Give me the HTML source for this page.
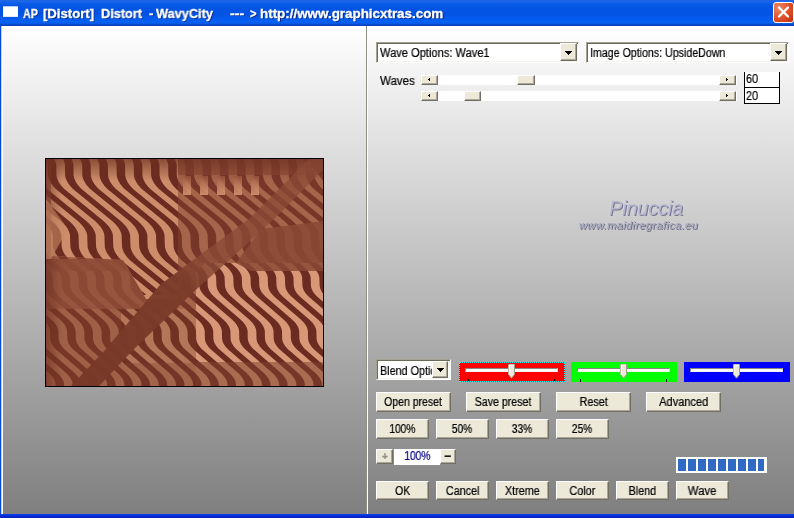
<!DOCTYPE html>
<html><head><meta charset="utf-8">
<style>
*{box-sizing:border-box;margin:0;padding:0}
html,body{width:794px;height:518px;overflow:hidden;background:#0848e0}
body{position:relative;font-family:"Liberation Sans",sans-serif;font-size:12px;color:#000}
.abs{position:absolute}
#title{left:0;top:0;width:794px;height:26px;background:linear-gradient(#2464dc 0,#1a66ec 6%,#0b5ce8 14%,#0354e4 30%,#0353e3 55%,#0459ec 70%,#0862f4 84%,#0a58e4 91%,#0a44c4 96%,#0a3cb8 100%)}
.tw{position:absolute;top:6px;-webkit-text-stroke:0.3px #fff;transform-origin:0 0;font-weight:bold;font-size:13px;color:#fff;white-space:pre;text-shadow:1px 1px 0 #0a2a8a}
#ico{left:3px;top:6px;width:15px;height:11px;background:#fff;border-top:1px solid #b8c8f0;border-bottom:1px solid #e8e8f4}
#close{left:773px;top:2px;width:21px;height:21px;border:1px solid #fff;border-radius:3px;background:radial-gradient(circle at 25% 25%,#ec8866,#e04e28 55%,#b8300c)}
#client{left:1px;top:26px;width:793px;height:488px;background:linear-gradient(#ffffff 0,#7f7f7f 100%)}
#lw{left:1px;top:26px;width:2px;height:488px;background:#fff;border-left:1px solid #d8d0c4}
#lg{display:none}
#div{left:366px;top:26px;width:1px;height:488px;background:#908e80}
#div2{left:367px;top:26px;width:1px;height:488px;background:#fff}
#bot{left:0;top:514px;width:794px;height:4px;background:linear-gradient(#0a3cf0,#0420b8)}
#prev{left:45px;top:158px;width:279px;height:229px;border:1px solid #000;background:#8a4836;overflow:hidden}
#prev svg{display:block}
.tx,.bl,.tw,.wm1,.wm2{will-change:transform}
.tx,.bl{-webkit-text-stroke:0.22px currentColor}
.tx{position:absolute;white-space:pre;transform-origin:0 0;line-height:14px}
.bl{display:inline-block;white-space:pre}
.sel{background:#fff;border:1px solid;border-color:#a5a293 #fff #fff #a5a293;box-shadow:inset 1px 1px 0 #6b6959, inset -1px -1px 0 #f4f2ea}
.dd{position:absolute;right:1px;top:0;bottom:1px;width:17px;background:#ece9d8;border:1px solid;border-color:#fff #716f64 #716f64 #fff;box-shadow:inset -1px -1px 0 #aca899}
.dd svg{position:absolute;left:4px;top:7px}
.dd.sm{right:2px;top:1px;width:16px}
.dd.sm svg{top:6px}
.btn{background:#ece9d8;border:1px solid;border-color:#fff #716f64 #716f64 #fff;box-shadow:inset -1px -1px 0 #aca899;text-align:center;white-space:nowrap}
.sb{height:10px;background:#fff}
.sbb{position:absolute;top:0;height:10px;background:#ece9d8;border:1px solid;border-color:#fff #716f64 #716f64 #fff;box-shadow:inset -1px -1px 0 #aca899}
.ar{position:absolute;left:6px;top:2px}
.val{background:#fff;border:1px solid #000}
.wm1{left:609px;top:197px;font-size:20px;color:#b6b6ce;letter-spacing:-0.2px;font-style:italic;text-shadow:1px 1px 0 #77778f,-0.5px -0.5px 0 #d8d8e8}
.wm2{left:579px;top:219px;font-size:11px;color:#a4a4bc;letter-spacing:0.4px;font-style:italic;text-shadow:1px 1px 0 #6c6c84}
.sl{top:362px;width:106px;height:20px}
.trk{position:absolute;left:6px;top:6px;width:93px;height:4px;background:#fff;border-top:1px solid #8a887c;border-left:1px solid #8a887c;border-right:1px solid #d8d4c4;border-bottom:1px solid #f4f2e8}
.th{position:absolute;top:2px}
.tk{position:absolute;top:17px;width:1px;height:3px;background:#000}
#focus{left:459px;top:362px;width:106px;height:20px;border:1px dotted #0ff}
#prog{left:676px;top:457px;width:91px;height:16px;background:#fff}
#prog i{position:absolute;top:2px;height:12px;background:#316ac5}
</style></head><body>
<div id="title" class="abs"><div id="ico" class="abs"></div><span class="tw" style="left:23.2px;transform:scaleX(0.819)">AP</span><span class="tw" style="left:42.9px;transform:scaleX(1.009)">[Distort]</span><span class="tw" style="left:101.2px;transform:scaleX(0.979)">Distort</span><span class="tw" style="left:149.0px;transform:scaleX(0.991)">-</span><span class="tw" style="left:156.2px;transform:scaleX(0.982)">WavyCity</span><span class="tw" style="left:230.0px;transform:scaleX(1.092)">---</span><span class="tw" style="left:249.6px;transform:scaleX(0.843)">&gt;</span><span class="tw" style="left:260.3px;transform:scaleX(1.030)">http://www.graphicxtras.com</span>
<div id="close" class="abs"><svg width="19" height="18" viewBox="0 0 19 18"><path d="M5 4.5L14 13.5M14 4.5L5 13.5" stroke="#fff" stroke-width="2.3" stroke-linecap="round"/></svg></div></div>
<div id="client" class="abs"></div>
<div id="lw" class="abs"></div><div id="lg" class="abs"></div>
<div id="div" class="abs"></div><div id="div2" class="abs"></div>
<div id="bot" class="abs"></div>
<div id="prev" class="abs"><svg width="277" height="227" viewBox="0 0 277 227"><defs><clipPath id="cT"><rect width="277" height="112"/></clipPath><clipPath id="cB"><rect y="112" width="277" height="115"/></clipPath><clipPath id="cTL"><path d="M5 0H132V140H100L77 101L5 97Z"/></clipPath><clipPath id="cBR"><path d="M150 113L158 104H277V203H150Z"/></clipPath><linearGradient id="bandg" x1="0" y1="1" x2="1" y2="0"><stop offset="0" stop-color="#783828" stop-opacity=".96"/><stop offset=".45" stop-color="#7c3c2a" stop-opacity=".96"/><stop offset=".55" stop-color="#8a4a36" stop-opacity=".8"/><stop offset="1" stop-color="#8a4a36" stop-opacity=".7"/></linearGradient><linearGradient id="comb" x1="0" y1="0" x2="0" y2="1"><stop offset="0" stop-color="#a05a42"/><stop offset="1" stop-color="#e0a07c"/></linearGradient><path id="wA" fill="#6b2b20" d="M-11 122 3.7 134 5.7 136 14.2 136 12.2 134 -2.5 122ZM-11 108 18.6 132 20.9 134 22.9 136 31.4 136 29.4 134 27.1 132 -2.5 108ZM-10.9 74 -10.4 76 -10 88 -9.5 90 -8.8 92 -7.8 94 -6.5 96 -5 98 -3.2 100 -1.1 102 35.8 132 38.1 134 40.1 136 48.6 136 46.6 134 44.3 132 7.4 102 5.3 100 3.5 98 2 96 0.7 94 -0.3 92 -1 90 -1.5 88 -1.9 76 -2.4 74ZM-12.5 54 -2.6 62 -0.5 64 1.4 66 3.1 68 4.4 70 5.5 72 6.3 74 6.8 76 7.2 88 7.7 90 8.4 92 9.4 94 10.7 96 12.2 98 14 100 16.1 102 53 132 55.3 134 57.3 136 65.8 136 63.8 134 61.5 132 24.6 102 22.5 100 20.7 98 19.2 96 17.9 94 16.9 92 16.2 90 15.7 88 15.3 76 14.8 74 14 72 12.9 70 11.6 68 9.9 66 8 64 5.9 62 -4 54ZM-12.5 40 14.6 62 16.7 64 18.6 66 20.3 68 21.6 70 22.7 72 23.5 74 24 76 24.4 88 24.9 90 25.6 92 26.6 94 27.9 96 29.4 98 31.2 100 33.3 102 70.2 132 72.5 134 74.5 136 83 136 81 134 78.7 132 41.8 102 39.7 100 37.9 98 36.4 96 35.1 94 34.1 92 33.4 90 32.9 88 32.5 76 32 74 31.2 72 30.1 70 28.8 68 27.1 66 25.2 64 23.1 62 -4 40ZM-11 26 -9.3 28 -7.4 30 31.8 62 33.9 64 35.8 66 37.5 68 38.8 70 39.9 72 40.7 74 41.2 76 41.6 88 42.1 90 42.8 92 43.8 94 45.1 96 46.6 98 48.4 100 50.5 102 87.4 132 89.7 134 91.7 136 100.2 136 98.2 134 95.9 132 59 102 56.9 100 55.1 98 53.6 96 52.3 94 51.3 92 50.6 90 50.1 88 49.7 76 49.2 74 48.4 72 47.3 70 46 68 44.3 66 42.4 64 40.3 62 1.1 30 -0.8 28 -2.5 26ZM-0.2 0 0.7 2 1.4 4 1.8 6 1.9 16 2.2 18 2.8 20 3.7 22 4.8 24 6.2 26 7.9 28 9.8 30 49 62 51.1 64 53 66 54.7 68 56 70 57.1 72 57.9 74 58.4 76 58.8 88 59.3 90 60 92 61 94 62.3 96 63.8 98 65.6 100 67.7 102 104.6 132 106.9 134 108.9 136 117.4 136 115.4 134 113.1 132 76.2 102 74.1 100 72.3 98 70.8 96 69.5 94 68.5 92 67.8 90 67.3 88 66.9 76 66.4 74 65.6 72 64.5 70 63.2 68 61.5 66 59.6 64 57.5 62 18.3 30 16.4 28 14.7 26 13.3 24 12.2 22 11.3 20 10.7 18 10.4 16 10.3 6 9.9 4 9.2 2 8.3 0ZM17 0 17.9 2 18.6 4 19 6 19.1 16 19.4 18 20 20 20.9 22 22 24 23.4 26 25.1 28 27 30 66.2 62 68.3 64 70.2 66 71.9 68 73.2 70 74.3 72 75.1 74 75.6 76 76 88 76.5 90 77.2 92 78.2 94 79.5 96 81 98 82.8 100 84.9 102 121.8 132 124.1 134 126.1 136 134.6 136 132.6 134 130.3 132 93.4 102 91.3 100 89.5 98 88 96 86.7 94 85.7 92 85 90 84.5 88 84.1 76 83.6 74 82.8 72 81.7 70 80.4 68 78.7 66 76.8 64 74.7 62 35.5 30 33.6 28 31.9 26 30.5 24 29.4 22 28.5 20 27.9 18 27.6 16 27.5 6 27.1 4 26.4 2 25.5 0ZM34.2 0 35.1 2 35.8 4 36.2 6 36.3 16 36.6 18 37.2 20 38.1 22 39.2 24 40.6 26 42.3 28 44.2 30 83.4 62 85.5 64 87.4 66 89.1 68 90.4 70 91.5 72 92.3 74 92.8 76 93.2 88 93.7 90 94.4 92 95.4 94 96.7 96 98.2 98 100 100 102.1 102 139 132 141.3 134 143.3 136 151.8 136 149.8 134 147.5 132 110.6 102 108.5 100 106.7 98 105.2 96 103.9 94 102.9 92 102.2 90 101.7 88 101.3 76 100.8 74 100 72 98.9 70 97.6 68 95.9 66 94 64 91.9 62 52.7 30 50.8 28 49.1 26 47.7 24 46.6 22 45.7 20 45.1 18 44.8 16 44.7 6 44.3 4 43.6 2 42.7 0ZM51.4 0 52.3 2 53 4 53.4 6 53.5 16 53.8 18 54.4 20 55.3 22 56.4 24 57.8 26 59.5 28 61.4 30 100.6 62 102.7 64 104.6 66 106.3 68 107.6 70 108.7 72 109.5 74 110 76 110.4 88 110.9 90 111.6 92 112.6 94 113.9 96 115.4 98 117.2 100 119.3 102 156.2 132 158.5 134 160.5 136 169 136 167 134 164.7 132 127.8 102 125.7 100 123.9 98 122.4 96 121.1 94 120.1 92 119.4 90 118.9 88 118.5 76 118 74 117.2 72 116.1 70 114.8 68 113.1 66 111.2 64 109.1 62 69.9 30 68 28 66.3 26 64.9 24 63.8 22 62.9 20 62.3 18 62 16 61.9 6 61.5 4 60.8 2 59.9 0ZM68.6 0 69.5 2 70.2 4 70.6 6 70.7 16 71 18 71.6 20 72.5 22 73.6 24 75 26 76.7 28 78.6 30 117.8 62 119.9 64 121.8 66 123.5 68 124.8 70 125.9 72 126.7 74 127.2 76 127.6 88 128.1 90 128.8 92 129.8 94 131.1 96 132.6 98 134.4 100 136.5 102 173.4 132 175.7 134 177.7 136 186.2 136 184.2 134 181.9 132 145 102 142.9 100 141.1 98 139.6 96 138.3 94 137.3 92 136.6 90 136.1 88 135.7 76 135.2 74 134.4 72 133.3 70 132 68 130.3 66 128.4 64 126.3 62 87.1 30 85.2 28 83.5 26 82.1 24 81 22 80.1 20 79.5 18 79.2 16 79.1 6 78.7 4 78 2 77.1 0ZM85.8 0 86.7 2 87.4 4 87.8 6 87.9 16 88.2 18 88.8 20 89.7 22 90.8 24 92.2 26 93.9 28 95.8 30 135 62 137.1 64 139 66 140.7 68 142 70 143.1 72 143.9 74 144.4 76 144.8 88 145.3 90 146 92 147 94 148.3 96 149.8 98 151.6 100 153.7 102 190.6 132 192.9 134 194.9 136 203.4 136 201.4 134 199.1 132 162.2 102 160.1 100 158.3 98 156.8 96 155.5 94 154.5 92 153.8 90 153.3 88 152.9 76 152.4 74 151.6 72 150.5 70 149.2 68 147.5 66 145.6 64 143.5 62 104.3 30 102.4 28 100.7 26 99.3 24 98.2 22 97.3 20 96.7 18 96.4 16 96.3 6 95.9 4 95.2 2 94.3 0ZM103 0 103.9 2 104.6 4 105 6 105.1 16 105.4 18 106 20 106.9 22 108 24 109.4 26 111.1 28 113 30 152.2 62 154.3 64 156.2 66 157.9 68 159.2 70 160.3 72 161.1 74 161.6 76 162 88 162.5 90 163.2 92 164.2 94 165.5 96 167 98 168.8 100 170.9 102 207.8 132 210.1 134 212.1 136 220.6 136 218.6 134 216.3 132 179.4 102 177.3 100 175.5 98 174 96 172.7 94 171.7 92 171 90 170.5 88 170.1 76 169.6 74 168.8 72 167.7 70 166.4 68 164.7 66 162.8 64 160.7 62 121.5 30 119.6 28 117.9 26 116.5 24 115.4 22 114.5 20 113.9 18 113.6 16 113.5 6 113.1 4 112.4 2 111.5 0ZM120.2 0 121.1 2 121.8 4 122.2 6 122.3 16 122.6 18 123.2 20 124.1 22 125.2 24 126.6 26 128.3 28 130.2 30 169.4 62 171.5 64 173.4 66 175.1 68 176.4 70 177.5 72 178.3 74 178.8 76 179.2 88 179.7 90 180.4 92 181.4 94 182.7 96 184.2 98 186 100 188.1 102 225 132 227.3 134 229.3 136 237.8 136 235.8 134 233.5 132 196.6 102 194.5 100 192.7 98 191.2 96 189.9 94 188.9 92 188.2 90 187.7 88 187.3 76 186.8 74 186 72 184.9 70 183.6 68 181.9 66 180 64 177.9 62 138.7 30 136.8 28 135.1 26 133.7 24 132.6 22 131.7 20 131.1 18 130.8 16 130.7 6 130.3 4 129.6 2 128.7 0ZM137.4 0 138.3 2 139 4 139.4 6 139.5 16 139.8 18 140.4 20 141.3 22 142.4 24 143.8 26 145.5 28 147.4 30 186.6 62 188.7 64 190.6 66 192.3 68 193.6 70 194.7 72 195.5 74 196 76 196.4 88 196.9 90 197.6 92 198.6 94 199.9 96 201.4 98 203.2 100 205.3 102 242.2 132 244.5 134 246.5 136 255 136 253 134 250.7 132 213.8 102 211.7 100 209.9 98 208.4 96 207.1 94 206.1 92 205.4 90 204.9 88 204.5 76 204 74 203.2 72 202.1 70 200.8 68 199.1 66 197.2 64 195.1 62 155.9 30 154 28 152.3 26 150.9 24 149.8 22 148.9 20 148.3 18 148 16 147.9 6 147.5 4 146.8 2 145.9 0ZM154.6 0 155.5 2 156.2 4 156.6 6 156.7 16 157 18 157.6 20 158.5 22 159.6 24 161 26 162.7 28 164.6 30 203.8 62 205.9 64 207.8 66 209.5 68 210.8 70 211.9 72 212.7 74 213.2 76 213.6 88 214.1 90 214.8 92 215.8 94 217.1 96 218.6 98 220.4 100 222.5 102 259.4 132 261.7 134 263.7 136 272.2 136 270.2 134 267.9 132 231 102 228.9 100 227.1 98 225.6 96 224.3 94 223.3 92 222.6 90 222.1 88 221.7 76 221.2 74 220.4 72 219.3 70 218 68 216.3 66 214.4 64 212.3 62 173.1 30 171.2 28 169.5 26 168.1 24 167 22 166.1 20 165.5 18 165.2 16 165.1 6 164.7 4 164 2 163.1 0ZM171.8 0 172.7 2 173.4 4 173.8 6 173.9 16 174.2 18 174.8 20 175.7 22 176.8 24 178.2 26 179.9 28 181.8 30 221 62 223.1 64 225 66 226.7 68 228 70 229.1 72 229.9 74 230.4 76 230.8 88 231.3 90 232 92 233 94 234.3 96 235.8 98 237.6 100 239.7 102 276.6 132 278.9 134 280.9 136 289.4 136 287.4 134 285.1 132 248.2 102 246.1 100 244.3 98 242.8 96 241.5 94 240.5 92 239.8 90 239.3 88 238.9 76 238.4 74 237.6 72 236.5 70 235.2 68 233.5 66 231.6 64 229.5 62 190.3 30 188.4 28 186.7 26 185.3 24 184.2 22 183.3 20 182.7 18 182.4 16 182.3 6 181.9 4 181.2 2 180.3 0ZM189 0 189.9 2 190.6 4 191 6 191.1 16 191.4 18 192 20 192.9 22 194 24 195.4 26 197.1 28 199 30 238.2 62 240.3 64 242.2 66 243.9 68 245.2 70 246.3 72 247.1 74 247.6 76 248 88 248.5 90 249.2 92 250.2 94 251.5 96 253 98 254.8 100 256.9 102 281.4 122 289.9 122 265.4 102 263.3 100 261.5 98 260 96 258.7 94 257.7 92 257 90 256.5 88 256.1 76 255.6 74 254.8 72 253.7 70 252.4 68 250.7 66 248.8 64 246.7 62 207.5 30 205.6 28 203.9 26 202.5 24 201.4 22 200.5 20 199.9 18 199.6 16 199.5 6 199.1 4 198.4 2 197.5 0ZM206.2 0 207.1 2 207.8 4 208.2 6 208.3 16 208.6 18 209.2 20 210.1 22 211.2 24 212.6 26 214.3 28 216.2 30 255.4 62 257.5 64 259.4 66 261.1 68 262.4 70 263.5 72 264.3 74 264.8 76 265.2 88 265.7 90 266.4 92 267.4 94 268.7 96 270.2 98 272 100 274.1 102 281.4 108 289.9 108 282.6 102 280.5 100 278.7 98 277.2 96 275.9 94 274.9 92 274.2 90 273.7 88 273.3 76 272.8 74 272 72 270.9 70 269.6 68 267.9 66 266 64 263.9 62 224.7 30 222.8 28 221.1 26 219.7 24 218.6 22 217.7 20 217.1 18 216.8 16 216.7 6 216.3 4 215.6 2 214.7 0ZM223.4 0 224.3 2 225 4 225.4 6 225.5 16 225.8 18 226.4 20 227.3 22 228.4 24 229.8 26 231.5 28 233.4 30 272.6 62 274.7 64 276.6 66 278.3 68 279.6 70 288.1 70 286.8 68 285.1 66 283.2 64 281.1 62 241.9 30 240 28 238.3 26 236.9 24 235.8 22 234.9 20 234.3 18 234 16 233.9 6 233.5 4 232.8 2 231.9 0ZM240.6 0 241.5 2 242.2 4 242.6 6 242.7 16 243 18 243.6 20 244.5 22 245.6 24 247 26 248.7 28 250.6 30 279.9 54 288.4 54 259.1 30 257.2 28 255.5 26 254.1 24 253 22 252.1 20 251.5 18 251.2 16 251.1 6 250.7 4 250 2 249.1 0ZM257.8 0 258.7 2 259.4 4 259.8 6 259.9 16 260.2 18 260.8 20 261.7 22 262.8 24 264.2 26 265.9 28 267.8 30 279.9 40 288.4 40 276.3 30 274.4 28 272.7 26 271.3 24 270.2 22 269.3 20 268.7 18 268.4 16 268.3 6 267.9 4 267.2 2 266.3 0ZM275 0 275.9 2 276.6 4 277 6 277.1 16 277.4 18 278 20 278.9 22 280 24 288.5 24 287.4 22 286.5 20 285.9 18 285.6 16 285.5 6 285.1 4 284.4 2 283.5 0Z"/><path id="wB" fill="#6b2b20" d="M-10.7 218 -9.4 220 -8.4 222 -7.8 224 -7.6 227 0.9 227 0.7 224 0.1 222 -0.9 220 -2.2 218ZM-11 202 2.9 214 4.9 216 6.5 218 7.8 220 8.8 222 9.4 224 9.6 227 18.1 227 17.9 224 17.3 222 16.3 220 15 218 13.4 216 11.4 214 -2.5 202ZM-10.8 186 -9.4 188 -7.6 190 20.1 214 22.1 216 23.7 218 25 220 26 222 26.6 224 26.8 227 35.3 227 35.1 224 34.5 222 33.5 220 32.2 218 30.6 216 28.6 214 0.9 190 -0.9 188 -2.3 186ZM-10.8 154 -1.7 162 0.2 164 1.6 166 2.7 168 3.5 170 3.9 172 4.1 180 4.5 182 5.2 184 6.4 186 7.8 188 9.6 190 37.3 214 39.3 216 40.9 218 42.2 220 43.2 222 43.8 224 44 227 52.5 227 52.3 224 51.7 222 50.7 220 49.4 218 47.8 216 45.8 214 18.1 190 16.3 188 14.9 186 13.7 184 13 182 12.6 180 12.4 172 12 170 11.2 168 10.1 166 8.7 164 6.8 162 -2.3 154ZM-12.1 138 13.4 160 15.5 162 17.4 164 18.8 166 19.9 168 20.7 170 21.1 172 21.3 180 21.7 182 22.4 184 23.6 186 25 188 26.8 190 54.5 214 56.5 216 58.1 218 59.4 220 60.4 222 61 224 61.2 227 69.7 227 69.5 224 68.9 222 67.9 220 66.6 218 65 216 63 214 35.3 190 33.5 188 32.1 186 30.9 184 30.2 182 29.8 180 29.6 172 29.2 170 28.4 168 27.3 166 25.9 164 24 162 21.9 160 -3.6 138ZM-10.6 106 -8.3 108 -6.3 110 -4.7 112 -3.4 114 -2.5 116 -1.9 118 -1.6 126 -1.4 128 -0.8 130 0.1 132 1.4 134 3.1 136 5.1 138 30.6 160 32.7 162 34.6 164 36 166 37.1 168 37.9 170 38.3 172 38.5 180 38.9 182 39.6 184 40.8 186 42.2 188 44 190 71.7 214 73.7 216 75.3 218 76.6 220 77.6 222 78.2 224 78.4 227 86.9 227 86.7 224 86.1 222 85.1 220 83.8 218 82.2 216 80.2 214 52.5 190 50.7 188 49.3 186 48.1 184 47.4 182 47 180 46.8 172 46.4 170 45.6 168 44.5 166 43.1 164 41.2 162 39.1 160 13.6 138 11.6 136 9.9 134 8.6 132 7.7 130 7.1 128 6.9 126 6.6 118 6 116 5.1 114 3.8 112 2.2 110 0.2 108 -2.1 106ZM-5 96 8.9 108 10.9 110 12.5 112 13.8 114 14.7 116 15.3 118 15.6 126 15.8 128 16.4 130 17.3 132 18.6 134 20.3 136 22.3 138 47.8 160 49.9 162 51.8 164 53.2 166 54.3 168 55.1 170 55.5 172 55.7 180 56.1 182 56.8 184 58 186 59.4 188 61.2 190 88.9 214 90.9 216 92.5 218 93.8 220 94.8 222 95.4 224 95.6 227 104.1 227 103.9 224 103.3 222 102.3 220 101 218 99.4 216 97.4 214 69.7 190 67.9 188 66.5 186 65.3 184 64.6 182 64.2 180 64 172 63.6 170 62.8 168 61.7 166 60.3 164 58.4 162 56.3 160 30.8 138 28.8 136 27.1 134 25.8 132 24.9 130 24.3 128 24.1 126 23.8 118 23.2 116 22.3 114 21 112 19.4 110 17.4 108 3.5 96ZM12.2 96 26.1 108 28.1 110 29.7 112 31 114 31.9 116 32.5 118 32.8 126 33 128 33.6 130 34.5 132 35.8 134 37.5 136 39.5 138 65 160 67.1 162 69 164 70.4 166 71.5 168 72.3 170 72.7 172 72.9 180 73.3 182 74 184 75.2 186 76.6 188 78.4 190 106.1 214 108.1 216 109.7 218 111 220 112 222 112.6 224 112.8 227 121.3 227 121.1 224 120.5 222 119.5 220 118.2 218 116.6 216 114.6 214 86.9 190 85.1 188 83.7 186 82.5 184 81.8 182 81.4 180 81.2 172 80.8 170 80 168 78.9 166 77.5 164 75.6 162 73.5 160 48 138 46 136 44.3 134 43 132 42.1 130 41.5 128 41.3 126 41 118 40.4 116 39.5 114 38.2 112 36.6 110 34.6 108 20.7 96ZM29.4 96 43.3 108 45.3 110 46.9 112 48.2 114 49.1 116 49.7 118 50 126 50.2 128 50.8 130 51.7 132 53 134 54.7 136 56.7 138 82.2 160 84.3 162 86.2 164 87.6 166 88.7 168 89.5 170 89.9 172 90.1 180 90.5 182 91.2 184 92.4 186 93.8 188 95.6 190 123.3 214 125.3 216 126.9 218 128.2 220 129.2 222 129.8 224 130 227 138.5 227 138.3 224 137.7 222 136.7 220 135.4 218 133.8 216 131.8 214 104.1 190 102.3 188 100.9 186 99.7 184 99 182 98.6 180 98.4 172 98 170 97.2 168 96.1 166 94.7 164 92.8 162 90.7 160 65.2 138 63.2 136 61.5 134 60.2 132 59.3 130 58.7 128 58.5 126 58.2 118 57.6 116 56.7 114 55.4 112 53.8 110 51.8 108 37.9 96ZM46.6 96 60.5 108 62.5 110 64.1 112 65.4 114 66.3 116 66.9 118 67.2 126 67.4 128 68 130 68.9 132 70.2 134 71.9 136 73.9 138 99.4 160 101.5 162 103.4 164 104.8 166 105.9 168 106.7 170 107.1 172 107.3 180 107.7 182 108.4 184 109.6 186 111 188 112.8 190 140.5 214 142.5 216 144.1 218 145.4 220 146.4 222 147 224 147.2 227 155.7 227 155.5 224 154.9 222 153.9 220 152.6 218 151 216 149 214 121.3 190 119.5 188 118.1 186 116.9 184 116.2 182 115.8 180 115.6 172 115.2 170 114.4 168 113.3 166 111.9 164 110 162 107.9 160 82.4 138 80.4 136 78.7 134 77.4 132 76.5 130 75.9 128 75.7 126 75.4 118 74.8 116 73.9 114 72.6 112 71 110 69 108 55.1 96ZM63.8 96 77.7 108 79.7 110 81.3 112 82.6 114 83.5 116 84.1 118 84.4 126 84.6 128 85.2 130 86.1 132 87.4 134 89.1 136 91.1 138 116.6 160 118.7 162 120.6 164 122 166 123.1 168 123.9 170 124.3 172 124.5 180 124.9 182 125.6 184 126.8 186 128.2 188 130 190 157.7 214 159.7 216 161.3 218 162.6 220 163.6 222 164.2 224 164.4 227 172.9 227 172.7 224 172.1 222 171.1 220 169.8 218 168.2 216 166.2 214 138.5 190 136.7 188 135.3 186 134.1 184 133.4 182 133 180 132.8 172 132.4 170 131.6 168 130.5 166 129.1 164 127.2 162 125.1 160 99.6 138 97.6 136 95.9 134 94.6 132 93.7 130 93.1 128 92.9 126 92.6 118 92 116 91.1 114 89.8 112 88.2 110 86.2 108 72.3 96ZM81 96 94.9 108 96.9 110 98.5 112 99.8 114 100.7 116 101.3 118 101.6 126 101.8 128 102.4 130 103.3 132 104.6 134 106.3 136 108.3 138 133.8 160 135.9 162 137.8 164 139.2 166 140.3 168 141.1 170 141.5 172 141.7 180 142.1 182 142.8 184 144 186 145.4 188 147.2 190 174.9 214 176.9 216 178.5 218 179.8 220 180.8 222 181.4 224 181.6 227 190.1 227 189.9 224 189.3 222 188.3 220 187 218 185.4 216 183.4 214 155.7 190 153.9 188 152.5 186 151.3 184 150.6 182 150.2 180 150 172 149.6 170 148.8 168 147.7 166 146.3 164 144.4 162 142.3 160 116.8 138 114.8 136 113.1 134 111.8 132 110.9 130 110.3 128 110.1 126 109.8 118 109.2 116 108.3 114 107 112 105.4 110 103.4 108 89.5 96ZM98.2 96 112.1 108 114.1 110 115.7 112 117 114 117.9 116 118.5 118 118.8 126 119 128 119.6 130 120.5 132 121.8 134 123.5 136 125.5 138 151 160 153.1 162 155 164 156.4 166 157.5 168 158.3 170 158.7 172 158.9 180 159.3 182 160 184 161.2 186 162.6 188 164.4 190 192.1 214 194.1 216 195.7 218 197 220 198 222 198.6 224 198.8 227 207.3 227 207.1 224 206.5 222 205.5 220 204.2 218 202.6 216 200.6 214 172.9 190 171.1 188 169.7 186 168.5 184 167.8 182 167.4 180 167.2 172 166.8 170 166 168 164.9 166 163.5 164 161.6 162 159.5 160 134 138 132 136 130.3 134 129 132 128.1 130 127.5 128 127.3 126 127 118 126.4 116 125.5 114 124.2 112 122.6 110 120.6 108 106.7 96ZM115.4 96 129.3 108 131.3 110 132.9 112 134.2 114 135.1 116 135.7 118 136 126 136.2 128 136.8 130 137.7 132 139 134 140.7 136 142.7 138 168.2 160 170.3 162 172.2 164 173.6 166 174.7 168 175.5 170 175.9 172 176.1 180 176.5 182 177.2 184 178.4 186 179.8 188 181.6 190 209.3 214 211.3 216 212.9 218 214.2 220 215.2 222 215.8 224 216 227 224.5 227 224.3 224 223.7 222 222.7 220 221.4 218 219.8 216 217.8 214 190.1 190 188.3 188 186.9 186 185.7 184 185 182 184.6 180 184.4 172 184 170 183.2 168 182.1 166 180.7 164 178.8 162 176.7 160 151.2 138 149.2 136 147.5 134 146.2 132 145.3 130 144.7 128 144.5 126 144.2 118 143.6 116 142.7 114 141.4 112 139.8 110 137.8 108 123.9 96ZM132.6 96 146.5 108 148.5 110 150.1 112 151.4 114 152.3 116 152.9 118 153.2 126 153.4 128 154 130 154.9 132 156.2 134 157.9 136 159.9 138 185.4 160 187.5 162 189.4 164 190.8 166 191.9 168 192.7 170 193.1 172 193.3 180 193.7 182 194.4 184 195.6 186 197 188 198.8 190 226.5 214 228.5 216 230.1 218 231.4 220 232.4 222 233 224 233.2 227 241.7 227 241.5 224 240.9 222 239.9 220 238.6 218 237 216 235 214 207.3 190 205.5 188 204.1 186 202.9 184 202.2 182 201.8 180 201.6 172 201.2 170 200.4 168 199.3 166 197.9 164 196 162 193.9 160 168.4 138 166.4 136 164.7 134 163.4 132 162.5 130 161.9 128 161.7 126 161.4 118 160.8 116 159.9 114 158.6 112 157 110 155 108 141.1 96ZM149.8 96 163.7 108 165.7 110 167.3 112 168.6 114 169.5 116 170.1 118 170.4 126 170.6 128 171.2 130 172.1 132 173.4 134 175.1 136 177.1 138 202.6 160 204.7 162 206.6 164 208 166 209.1 168 209.9 170 210.3 172 210.5 180 210.9 182 211.6 184 212.8 186 214.2 188 216 190 243.7 214 245.7 216 247.3 218 248.6 220 249.6 222 250.2 224 250.4 227 258.9 227 258.7 224 258.1 222 257.1 220 255.8 218 254.2 216 252.2 214 224.5 190 222.7 188 221.3 186 220.1 184 219.4 182 219 180 218.8 172 218.4 170 217.6 168 216.5 166 215.1 164 213.2 162 211.1 160 185.6 138 183.6 136 181.9 134 180.6 132 179.7 130 179.1 128 178.9 126 178.6 118 178 116 177.1 114 175.8 112 174.2 110 172.2 108 158.3 96ZM167 96 180.9 108 182.9 110 184.5 112 185.8 114 186.7 116 187.3 118 187.6 126 187.8 128 188.4 130 189.3 132 190.6 134 192.3 136 194.3 138 219.8 160 221.9 162 223.8 164 225.2 166 226.3 168 227.1 170 227.5 172 227.7 180 228.1 182 228.8 184 230 186 231.4 188 233.2 190 260.9 214 262.9 216 264.5 218 265.8 220 266.8 222 267.4 224 267.6 227 276.1 227 275.9 224 275.3 222 274.3 220 273 218 271.4 216 269.4 214 241.7 190 239.9 188 238.5 186 237.3 184 236.6 182 236.2 180 236 172 235.6 170 234.8 168 233.7 166 232.3 164 230.4 162 228.3 160 202.8 138 200.8 136 199.1 134 197.8 132 196.9 130 196.3 128 196.1 126 195.8 118 195.2 116 194.3 114 193 112 191.4 110 189.4 108 175.5 96ZM184.2 96 198.1 108 200.1 110 201.7 112 203 114 203.9 116 204.5 118 204.8 126 205 128 205.6 130 206.5 132 207.8 134 209.5 136 211.5 138 237 160 239.1 162 241 164 242.4 166 243.5 168 244.3 170 244.7 172 244.9 180 245.3 182 246 184 247.2 186 248.6 188 250.4 190 278.1 214 280.1 216 288.6 216 286.6 214 258.9 190 257.1 188 255.7 186 254.5 184 253.8 182 253.4 180 253.2 172 252.8 170 252 168 250.9 166 249.5 164 247.6 162 245.5 160 220 138 218 136 216.3 134 215 132 214.1 130 213.5 128 213.3 126 213 118 212.4 116 211.5 114 210.2 112 208.6 110 206.6 108 192.7 96ZM201.4 96 215.3 108 217.3 110 218.9 112 220.2 114 221.1 116 221.7 118 222 126 222.2 128 222.8 130 223.7 132 225 134 226.7 136 228.7 138 254.2 160 256.3 162 258.2 164 259.6 166 260.7 168 261.5 170 261.9 172 262.1 180 262.5 182 263.2 184 264.4 186 265.8 188 267.6 190 279.1 200 287.6 200 276.1 190 274.3 188 272.9 186 271.7 184 271 182 270.6 180 270.4 172 270 170 269.2 168 268.1 166 266.7 164 264.8 162 262.7 160 237.2 138 235.2 136 233.5 134 232.2 132 231.3 130 230.7 128 230.5 126 230.2 118 229.6 116 228.7 114 227.4 112 225.8 110 223.8 108 209.9 96ZM218.6 96 232.5 108 234.5 110 236.1 112 237.4 114 238.3 116 238.9 118 239.2 126 239.4 128 240 130 240.9 132 242.2 134 243.9 136 245.9 138 271.4 160 273.5 162 275.4 164 276.8 166 277.9 168 278.7 170 279.1 172 287.6 172 287.2 170 286.4 168 285.3 166 283.9 164 282 162 279.9 160 254.4 138 252.4 136 250.7 134 249.4 132 248.5 130 247.9 128 247.7 126 247.4 118 246.8 116 245.9 114 244.6 112 243 110 241 108 227.1 96ZM235.8 96 249.7 108 251.7 110 253.3 112 254.6 114 255.5 116 256.1 118 256.4 126 256.6 128 257.2 130 258.1 132 259.4 134 261.1 136 263.1 138 279.3 152 287.8 152 271.6 138 269.6 136 267.9 134 266.6 132 265.7 130 265.1 128 264.9 126 264.6 118 264 116 263.1 114 261.8 112 260.2 110 258.2 108 244.3 96ZM253 96 266.9 108 268.9 110 270.5 112 271.8 114 272.7 116 273.3 118 273.6 126 273.8 128 274.4 130 275.3 132 276.6 134 278.3 136 280.3 138 288.8 138 286.8 136 285.1 134 283.8 132 282.9 130 282.3 128 282.1 126 281.8 118 281.2 116 280.3 114 279 112 277.4 110 275.4 108 261.5 96ZM270.2 96 279.5 104 288 104 278.7 96Z"/></defs><rect width="277" height="227" fill="#d29270"/><g clip-path="url(#cT)"><use href="#wA"/></g><g clip-path="url(#cB)"><use href="#wB"/></g><rect x="132" y="0" width="145" height="112" fill="#82402e" opacity=".55"/><rect x="0" y="0" width="132" height="112" fill="#82402e" opacity=".6"/><rect x="0" y="100" width="132" height="50" fill="#8e4c38" opacity=".88"/><rect x="132" y="112" width="18" height="38" fill="#82402e" opacity=".55"/><rect x="0" y="150" width="75" height="77" fill="#7e3e2c" opacity=".6"/><rect x="75" y="150" width="75" height="54" fill="#7e3e2c" opacity=".35"/><rect x="75" y="204" width="75" height="23" fill="#7e3e2c" opacity=".55"/><rect x="150" y="203" width="127" height="24" fill="#84442f" opacity=".5"/><rect x="132" y="0" width="145" height="16" fill="#8a4734" opacity=".55"/><path fill="url(#comb)" opacity=".8" d="M137 17h8v19h-8zM154 17h8v19h-8zM171 17h8v19h-8zM188 17h8v19h-8zM205 17h8v19h-8z"/><g clip-path="url(#cTL)"><rect width="277" height="227" fill="#cd8d6b"/><use href="#wA"/></g><g clip-path="url(#cBR)"><rect width="277" height="227" fill="#d89878"/><use href="#wB"/></g><linearGradient id="tsh" x1="0" y1="0" x2="0" y2="1"><stop offset="0" stop-color="#6e3020" stop-opacity=".7"/><stop offset="1" stop-color="#6e3020" stop-opacity="0"/></linearGradient><rect width="277" height="22" fill="url(#tsh)"/><linearGradient id="lsh" x1="0" y1="0" x2="1" y2="0"><stop offset="0" stop-color="#6e3020" stop-opacity=".6"/><stop offset="1" stop-color="#6e3020" stop-opacity="0"/></linearGradient><rect width="16" height="227" fill="url(#lsh)"/><path d="M262 0H277V22Z" fill="#6a2a1c" opacity=".7"/><path d="M0 40L22 70L5 100H0Z" fill="#c98a68" opacity=".6"/><path d="M25 227L59 191L114 126L143 104L203 60L252 11L263 0H277V11L228 60L180 104L155 126L87 191L53 227Z" fill="url(#bandg)"/><path d="M215 70L277 62V112H205L190 104Z" fill="#8a4935" opacity=".85"/></svg></div>

<div class="abs sel" style="left:376px;top:42px;width:203px;height:21px"><span class="tx" style="left:3.0px;top:3px;transform:scaleX(0.925);">Wave Options: Wave1</span><div class="dd"><svg width="7" height="4" viewBox="0 0 7 4" shape-rendering="crispEdges"><rect x="0" y="0" width="7" height="1"/><rect x="1" y="1" width="5" height="1"/><rect x="2" y="2" width="3" height="1"/><rect x="3" y="3" width="1" height="1"/></svg></div></div>
<div class="abs sel" style="left:586px;top:42px;width:203px;height:21px"><span class="tx" style="left:3.0px;top:3px;transform:scaleX(0.886);">Image Options: UpsideDown</span><div class="dd"><svg width="7" height="4" viewBox="0 0 7 4" shape-rendering="crispEdges"><rect x="0" y="0" width="7" height="1"/><rect x="1" y="1" width="5" height="1"/><rect x="2" y="2" width="3" height="1"/><rect x="3" y="3" width="1" height="1"/></svg></div></div>
<span class="tx" style="left:379.5px;top:74px;transform:scaleX(0.960);">Waves</span>
<div class="abs sb" style="left:421px;top:75px;width:316px"><div class="sbb" style="left:0;width:17px"><svg class="ar" width="2" height="3" viewBox="0 0 2 3" shape-rendering="crispEdges"><rect x="1" y="0" width="1" height="3" fill="#000"/><rect x="0" y="1" width="1" height="1" fill="#000"/></svg></div><div class="sbb" style="left:96px;width:18px"></div><div class="sbb" style="left:298px;width:17px"><svg class="ar" width="2" height="3" viewBox="0 0 2 3" shape-rendering="crispEdges"><rect x="0" y="0" width="1" height="3" fill="#000"/><rect x="1" y="1" width="1" height="1" fill="#000"/></svg></div></div>
<div class="abs sb" style="left:421px;top:91px;width:316px"><div class="sbb" style="left:0;width:17px"><svg class="ar" width="2" height="3" viewBox="0 0 2 3" shape-rendering="crispEdges"><rect x="1" y="0" width="1" height="3" fill="#000"/><rect x="0" y="1" width="1" height="1" fill="#000"/></svg></div><div class="sbb" style="left:43px;width:17px"></div><div class="sbb" style="left:298px;width:17px"><svg class="ar" width="2" height="3" viewBox="0 0 2 3" shape-rendering="crispEdges"><rect x="0" y="0" width="1" height="3" fill="#000"/><rect x="1" y="1" width="1" height="1" fill="#000"/></svg></div></div>
<div class="abs val" style="left:744px;top:72px;width:36px;height:16px;border-top:0"><span class="tx" style="left:1.0px;top:0px;transform:scaleX(0.900);">60</span></div>
<div class="abs val" style="left:744px;top:87px;width:36px;height:17px"><span class="tx" style="left:1.0px;top:1px;transform:scaleX(0.900);">20</span></div>

<div class="abs wm1">Pinuccia</div>
<div class="abs wm2">www.maidiregrafica.eu</div>

<div class="abs sel" style="left:376px;top:359px;width:75px;height:21px"><div style="position:absolute;left:1px;top:1px;width:54px;height:18px;overflow:hidden"><span class="tx" style="left:2.0px;top:3px;transform:scaleX(0.900);">Blend Options</span></div><div class="dd sm"><svg width="7" height="4" viewBox="0 0 7 4" shape-rendering="crispEdges"><rect x="0" y="0" width="7" height="1"/><rect x="1" y="1" width="5" height="1"/><rect x="2" y="2" width="3" height="1"/><rect x="3" y="3" width="1" height="1"/></svg></div></div>
<div class="abs sl" style="left:459px;background:#ff0000"><div class="trk"></div><svg class="th" style="left:49px" width="7" height="15" viewBox="0 0 7 15"><path d="M0.5 0.5H6.5V10.5L3.5 14.2L0.5 10.5Z" fill="#ece9d8" stroke="#9c9a8c" stroke-width="1"/><path d="M1 1H6" stroke="#fff" stroke-width="1"/><path d="M1.2 1V10.5" stroke="#fff" stroke-width="1"/></svg><div class="tk" style="left:9px"></div><div class="tk" style="left:95px"></div></div>
<div class="abs sl" style="left:571px;background:#00ff00"><div class="trk"></div><svg class="th" style="left:49px" width="7" height="15" viewBox="0 0 7 15"><path d="M0.5 0.5H6.5V10.5L3.5 14.2L0.5 10.5Z" fill="#ece9d8" stroke="#9c9a8c" stroke-width="1"/><path d="M1 1H6" stroke="#fff" stroke-width="1"/><path d="M1.2 1V10.5" stroke="#fff" stroke-width="1"/></svg><div class="tk" style="left:9px"></div><div class="tk" style="left:95px"></div></div>
<div class="abs sl" style="left:684px;background:#0000ff"><div class="trk"></div><svg class="th" style="left:49px" width="7" height="15" viewBox="0 0 7 15"><path d="M0.5 0.5H6.5V10.5L3.5 14.2L0.5 10.5Z" fill="#ece9d8" stroke="#9c9a8c" stroke-width="1"/><path d="M1 1H6" stroke="#fff" stroke-width="1"/><path d="M1.2 1V10.5" stroke="#fff" stroke-width="1"/></svg><div class="tk" style="left:9px"></div><div class="tk" style="left:95px"></div></div>
<div class="abs" id="focus"></div>

<div class="abs btn" style="left:376px;top:392px;width:75px;height:20px;line-height:18px;"><span class="bl" style="transform:scaleX(0.875)">Open preset</span></div>
<div class="abs btn" style="left:466px;top:392px;width:75px;height:20px;line-height:18px;"><span class="bl" style="transform:scaleX(0.885)">Save preset</span></div>
<div class="abs btn" style="left:556px;top:392px;width:75px;height:20px;line-height:18px;"><span class="bl" style="transform:scaleX(0.900)">Reset</span></div>
<div class="abs btn" style="left:646px;top:392px;width:75px;height:20px;line-height:18px;"><span class="bl" style="transform:scaleX(0.920)">Advanced</span></div>

<div class="abs btn" style="left:376px;top:419px;width:53px;height:20px;line-height:18px;"><span class="bl" style="transform:scaleX(0.850)">100%</span></div>
<div class="abs btn" style="left:436px;top:419px;width:53px;height:20px;line-height:18px;"><span class="bl" style="transform:scaleX(0.850)">50%</span></div>
<div class="abs btn" style="left:496px;top:419px;width:53px;height:20px;line-height:18px;"><span class="bl" style="transform:scaleX(0.850)">33%</span></div>
<div class="abs btn" style="left:556px;top:419px;width:53px;height:20px;line-height:18px;"><span class="bl" style="transform:scaleX(0.850)">25%</span></div>

<div class="abs btn" style="left:376px;top:449px;width:17px;height:15px;line-height:14px;color:#8f8d80;font-size:10px;font-weight:bold"><span class="bl" style="transform:scaleX(1.000)">+</span></div>
<div class="abs" style="left:394px;top:449px;width:46px;height:16px;background:#fff;color:#000080;text-align:center;line-height:15px"><span class="bl" style="transform:scaleX(0.85)">100%</span></div>
<div class="abs btn" style="left:440px;top:449px;width:16px;height:15px;line-height:12px;font-weight:bold"><span class="bl" style="transform:scaleX(1.000)">−</span></div>

<div class="abs" id="prog"><i style="left:2px;width:8px"></i><i style="left:12px;width:8px"></i><i style="left:22px;width:8px"></i><i style="left:32px;width:8px"></i><i style="left:42px;width:8px"></i><i style="left:52px;width:8px"></i><i style="left:62px;width:8px"></i><i style="left:72px;width:8px"></i><i style="left:82px;width:6px"></i></div>

<div class="abs btn" style="left:376px;top:481px;width:53px;height:19px;line-height:18px;"><span class="bl" style="transform:scaleX(0.880)">OK</span></div>
<div class="abs btn" style="left:436px;top:481px;width:53px;height:19px;line-height:18px;"><span class="bl" style="transform:scaleX(0.900)">Cancel</span></div>
<div class="abs btn" style="left:496px;top:481px;width:53px;height:19px;line-height:18px;"><span class="bl" style="transform:scaleX(0.900)">Xtreme</span></div>
<div class="abs btn" style="left:556px;top:481px;width:53px;height:19px;line-height:18px;"><span class="bl" style="transform:scaleX(0.900)">Color</span></div>
<div class="abs btn" style="left:616px;top:481px;width:53px;height:19px;line-height:18px;"><span class="bl" style="transform:scaleX(0.900)">Blend</span></div>
<div class="abs btn" style="left:676px;top:481px;width:53px;height:19px;line-height:18px;"><span class="bl" style="transform:scaleX(0.950)">Wave</span></div>
</body></html>
